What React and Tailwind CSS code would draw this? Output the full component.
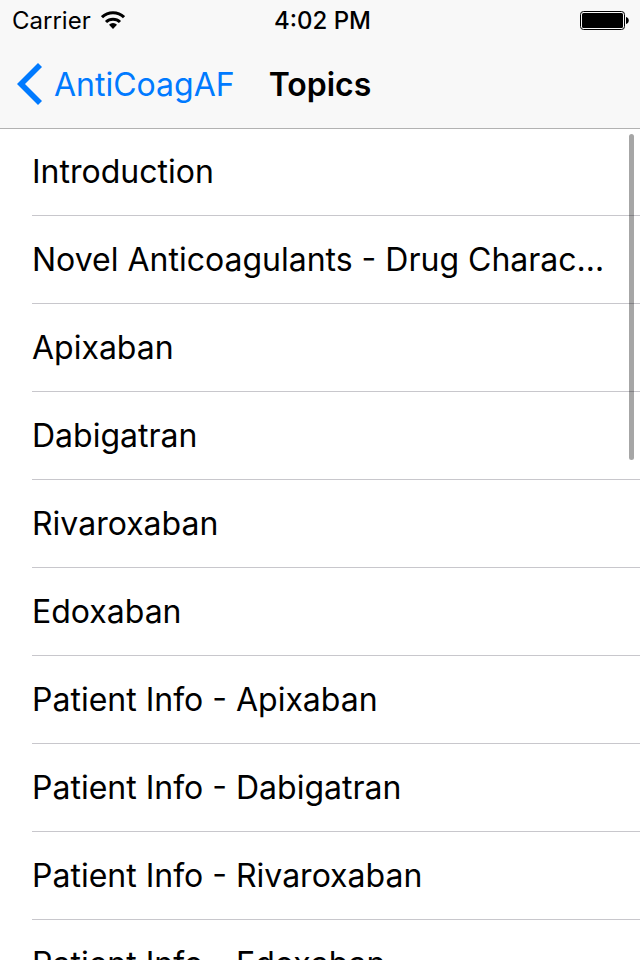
const topics = [
  'Introduction',
  'Novel Anticoagulants - Drug Characteristics',
  'Apixaban',
  'Dabigatran',
  'Rivaroxaban',
  'Edoxaban',
  'Patient Info - Apixaban',
  'Patient Info - Dabigatran',
  'Patient Info - Rivaroxaban',
  'Patient Info - Edoxaban',
];

function WifiIcon() {
  return (
    <svg className="w-6 h-5" viewBox="0 0 24 20" fill="none" stroke="currentColor" strokeWidth={3} aria-hidden="true">
      <path d="M1 6.2a15.8 15.8 0 0 1 22 0" />
      <path d="M5 11a10 10 0 0 1 14 0" />
      <path d="M12 18l-4-4.2a5.6 5.6 0 0 1 8 0z" fill="currentColor" stroke="none" />
    </svg>
  );
}

function BatteryIcon() {
  return (
    <svg className="w-[49px] h-5" viewBox="0 0 49 20" aria-hidden="true">
      <rect x="0.5" y="0.5" width="44" height="18" rx="3" fill="none" stroke="currentColor" />
      <rect x="2" y="2" width="41" height="15" rx="1.5" fill="currentColor" />
      <path d="M46 6a3.6 3.6 0 0 1 0 7z" fill="currentColor" />
    </svg>
  );
}

function StatusBar() {
  return (
    <div className="grid grid-cols-[1fr_auto_1fr] items-center h-10 pt-0.5 pl-3 pr-[11px] text-2xl">
      <div className="flex items-center gap-2.5">
        <span>Carrier</span>
        <WifiIcon />
      </div>
      <span className="pl-1 font-medium">4:02 PM</span>
      <div className="flex justify-end">
        <BatteryIcon />
      </div>
    </div>
  );
}

export default function App() {
  return (
    <div className="flex flex-col h-screen overflow-hidden bg-white text-black font-['Inter',sans-serif]">
      <header className="relative z-10 shrink-0 bg-[#f8f8f8] shadow-[0_1px_0_#b2b2b2]">
        <StatusBar />
        <nav className="flex items-center gap-[34px] h-22 pt-0.5 px-4">
          <button type="button" className="flex items-center gap-3 text-[32px] text-[#007aff]">
            <svg className="w-[26px] h-11" viewBox="0 0 26 44" fill="currentColor" aria-hidden="true">
              <path d="M22 0l4 4L9 21l17 17-4 4L1 21z" />
            </svg>
            AntiCoagAF
          </button>
          <h1 className="text-[32px] font-semibold">Topics</h1>
        </nav>
      </header>

      <main className="relative flex-1 min-h-0 overflow-hidden">
        <ul className="pl-8">
          {topics.map((topic) => (
            <li key={topic} className="h-22 border-b border-[#c8c7cc]">
              <button type="button" className="block w-full h-full pr-7 text-left text-[32px] truncate">
                {topic}
              </button>
            </li>
          ))}
        </ul>
        {/* Scroll indicator */}
        <div className="absolute top-1.5 right-1.5 w-[5px] h-[326px] rounded-full bg-black/35" />
      </main>
    </div>
  );
}
